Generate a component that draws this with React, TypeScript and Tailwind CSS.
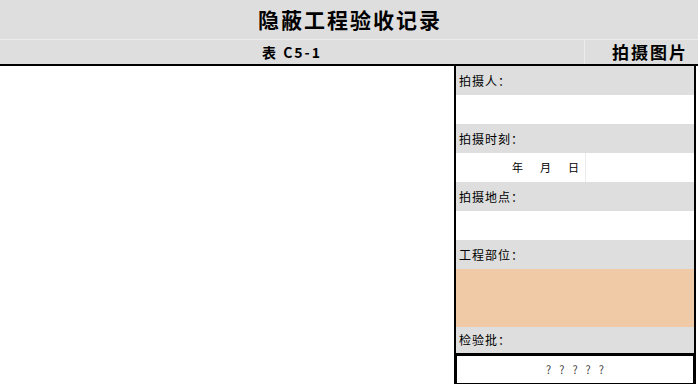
const cjk = { fontFamily: '"Noto Sans CJK SC", "Liberation Sans", sans-serif' };

// 右侧信息栏里的一行：灰底标题行
const LabelRow = ({ text }: { text: string }) => (
  <div className="h-[29px] bg-[#dedede] flex items-center pl-[3px] text-[12px] text-black tracking-[1px]">
    {text}
  </div>
);

const BlankRow = ({ tall = false, tint = false }: { tall?: boolean; tint?: boolean }) => (
  <div className={`${tall ? "h-[58px]" : "h-[29px]"} ${tint ? "bg-[#f0c9a6]" : "bg-white"}`} />
);

export default function App() {
  return (
    <div className="w-[698px] h-[384px] bg-white overflow-hidden flex flex-col" style={cjk}>
      {/* 标题 */}
      <div className="h-[40px] bg-[#dedede] border-b border-[#ececec] flex items-center justify-center">
        <span className="text-[21px] font-bold text-black tracking-[2px] pl-[2px]">隐蔽工程验收记录</span>
      </div>

      {/* 表号 / 拍摄图片 */}
      <div className="h-[26px] bg-[#dedede] border-b-2 border-black flex">
        <div className="w-[585px] border-r border-[#ececec] flex items-center justify-center">
          <span className="text-[14px] font-bold text-black tracking-[2px]">表 C5-1</span>
        </div>
        <div className="flex-1 flex items-center justify-end pr-[10px]">
          <span className="text-[17px] font-bold text-black tracking-[2px]">拍摄图片</span>
        </div>
      </div>

      <div className="flex flex-1">
        <div className="w-[454px] bg-white" />
        <div className="w-[242px] border-l-2 border-r-2 border-black flex flex-col">
          <LabelRow text="拍摄人：" />
          <BlankRow />
          <LabelRow text="拍摄时刻：" />
          <div className="h-[29px] bg-white flex">
            <div className="w-[130px] border-r border-[#ececec] flex items-center justify-end pr-[6px] gap-[17px] text-[11px] text-black">
              <span>年</span>
              <span>月</span>
              <span>日</span>
            </div>
            <div className="flex-1" />
          </div>
          <LabelRow text="拍摄地点：" />
          <BlankRow />
          <LabelRow text="工程部位：" />
          <BlankRow tall tint />
          <div className="h-[28px] bg-[#dedede] flex items-center pl-[3px] text-[12px] text-black tracking-[1px] border-b-2 border-black">
            检验批：
          </div>
          <div className="flex-1 bg-white border border-black flex items-center justify-center">
            <span className="text-[11px] text-[#444] tracking-[8px] pl-[8px]">?????</span>
          </div>
        </div>
      </div>
    </div>
  );
}
